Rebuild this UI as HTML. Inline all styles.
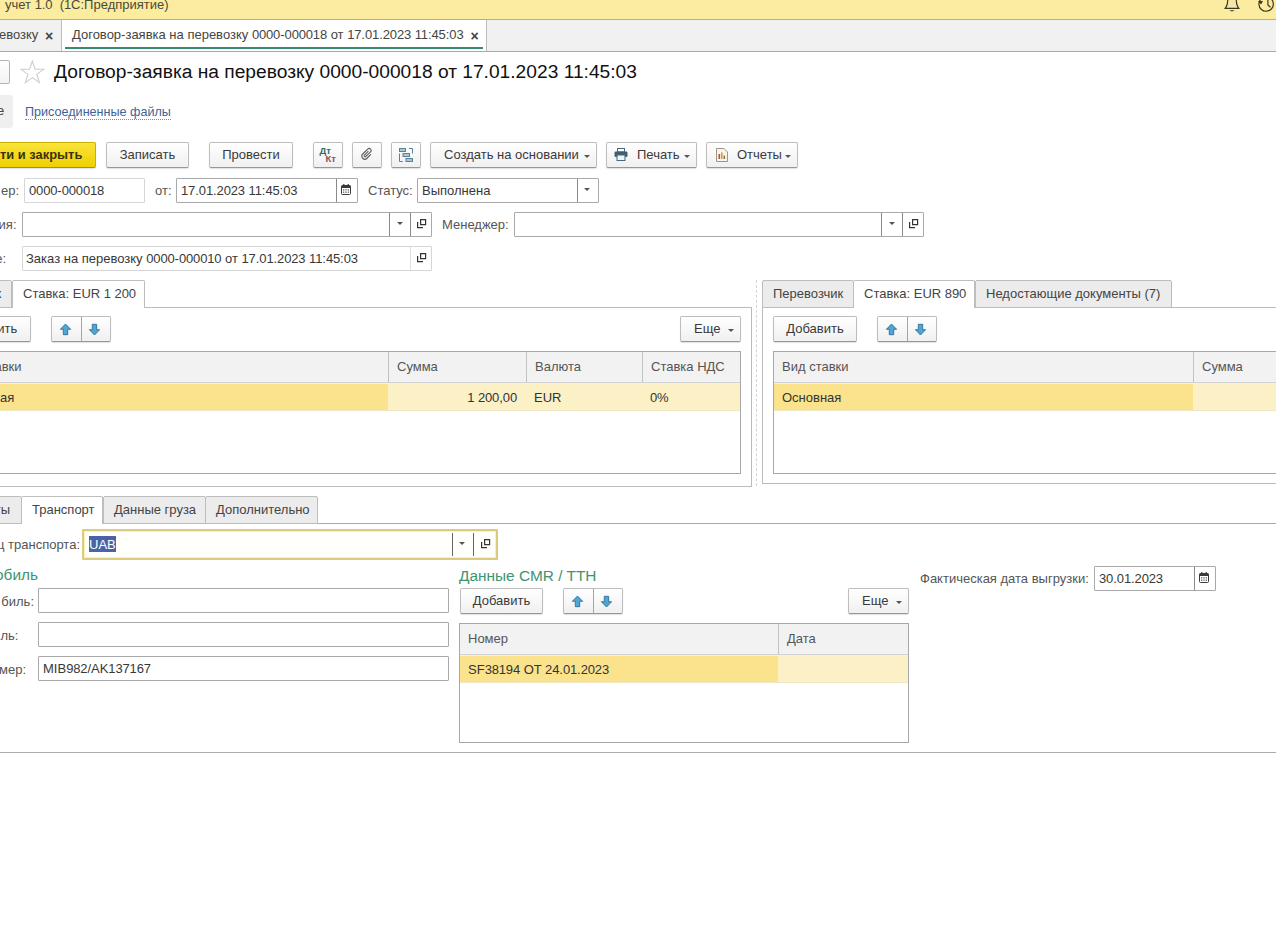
<!DOCTYPE html>
<html><head><meta charset="utf-8">
<style>
*{box-sizing:border-box;margin:0;padding:0}
html,body{width:1276px;height:926px;overflow:hidden;background:#fff;font-family:"Liberation Sans",sans-serif;font-size:13px;color:#333}
.a{position:absolute;white-space:nowrap}
.t{position:absolute;white-space:nowrap;line-height:15px}
.btn{position:absolute;height:26px;border:1px solid #bdbdbd;border-bottom-color:#979797;border-radius:2px;background:linear-gradient(#fff,#f0f0f0);box-shadow:0 1px 1px rgba(0,0,0,.12);text-align:center;line-height:24px;color:#3a3a3a;white-space:nowrap}
.fld{position:absolute;height:25px;border:1px solid #a9a9a9;border-radius:1px;background:#fff;line-height:23px;padding-left:4px;color:#383838;white-space:nowrap}
.lbl{position:absolute;color:#555;white-space:nowrap;line-height:15px}
.tri{position:absolute;width:0;height:0;border-left:3.5px solid transparent;border-right:3.5px solid transparent;border-top:3.5px solid #555}
.sep{position:absolute;top:0;bottom:0;width:1px;background:#cfcfcf}
.tab{position:absolute;height:28px;border:1px solid #bdbdbd;border-radius:2px 2px 0 0;background:#ececec;line-height:26px;color:#444;padding-left:10px;white-space:nowrap}
.tab.on{background:#fff;border-bottom:none;z-index:2}
.tbl{position:absolute;border:1px solid #a8a8a8;background:#fff;overflow:hidden}
.th{position:absolute;top:0;height:31px;background:#f2f2f2;border-bottom:1px solid #d2d2d2;line-height:30px;color:#555;padding-left:8px;white-space:nowrap}
.tr{position:absolute;height:28px;line-height:27px;color:#333;padding-left:8px;white-space:nowrap;border-bottom:1px solid #efe6c6}
.dg{letter-spacing:-0.15px}
.green{position:absolute;color:#3e9470;font-size:15.4px;white-space:nowrap;line-height:18px}
</style></head><body>
<div class="a" style="left:0;top:0;width:1276px;height:20px;background:#fbec9f;border-bottom:1px solid #b8af88"></div>
<div class="a" style="left:5px;top:-3px;color:#4a4a3a">учет <span class="dg">1</span>.<span class="dg">0</span>&nbsp; (<span class="dg">1</span>С:Предприятие)</div>
<svg class="a" style="left:1220px;top:-4px" width="24" height="18" viewBox="0 0 24 18"><path d="M8.2 0 L7.3 8 Q6.5 10.5 5.2 12.3 H18.8 Q17.5 10.5 16.7 8 L15.8 0" fill="#f6e7a6" stroke="#3d3822" stroke-width="1.2"/><path d="M9.3 14.3 H14.7 Q12 16.6 9.3 14.3 Z" fill="#3d3822"/></svg>
<svg class="a" style="left:1250px;top:-5px" width="26" height="20" viewBox="0 0 26 20"><path d="M11 4 A7.2 7.2 0 1 0 20 3" fill="none" stroke="#3d3822" stroke-width="1.2"/><path d="M17.9 2 V10 L20.5 12.3" fill="none" stroke="#3d3822" stroke-width="1.2"/><path d="M8 6 L13 6 L11 9.5 Z" fill="#3d3822"/></svg>
<div class="a" style="left:0;top:20px;width:1276px;height:32px;background:#f1f1f1;border-bottom:1px solid #a9a9a9"></div>
<div class="a" style="left:-1px;top:27px;color:#444">евозку</div>
<div class="a" style="left:45px;top:28px;font-size:14px;color:#444;font-weight:bold">×</div>
<div class="a" style="left:61px;top:20px;width:1px;height:31px;background:#bdbdbd"></div>
<div class="a" style="left:62px;top:20px;width:424px;height:31px;background:#fff"></div>
<div class="a" style="left:486px;top:20px;width:1px;height:31px;background:#bdbdbd"></div>
<div class="a" style="left:72px;top:27px;color:#444">Договор-заявка на перевозку <span class="dg">0000</span>-<span class="dg">000018</span> от <span class="dg">17</span>.<span class="dg">01</span>.<span class="dg">2023</span> <span class="dg">11</span>:<span class="dg">45</span>:<span class="dg">03</span></div>
<div class="a" style="left:470.5px;top:27.5px;font-size:14px;color:#444;font-weight:bold">×</div>
<div class="a" style="left:65px;top:47px;width:418px;height:2px;background:#3b8a6a"></div>
<div class="a" style="left:-4px;top:60px;width:14px;height:24px;border:1px solid #b4b4b4;border-radius:2px;background:linear-gradient(#fff,#f3f3f3)"></div>
<svg class="a" style="left:20px;top:60px" width="25" height="25" viewBox="0 0 25 25"><path d="M12.40 1.10 L15.13 9.25 L23.72 9.32 L16.81 14.43 L19.39 22.63 L12.40 17.64 L5.41 22.63 L7.99 14.43 L1.08 9.32 L9.67 9.25 Z" fill="none" stroke="#cdcdcd" stroke-width="1.1" stroke-linejoin="miter"/></svg>
<div class="a" style="left:54px;top:61px;font-size:19.2px;color:#111">Договор-заявка на перевозку 0000-000018 от 17.01.2023 11:45:03</div>
<div class="a" style="left:-4px;top:95px;width:17px;height:33px;background:#efefef;border-radius:3px"></div>
<div class="t" style="left:-3px;top:103px;color:#444">е</div>
<div class="t" style="left:25px;top:106px;font-size:12.6px;color:#3d6396;border-bottom:1px dotted #6f8db5;line-height:13px">Присоединенные файлы</div>
<div class="btn" style="left:-6px;top:142px;width:102px;background:linear-gradient(#fbe84a,#f1d400);border-color:#d2b800;border-bottom-color:#b09a00;font-weight:bold;color:#3a3206;text-align:left;padding-left:5px;font-size:12.9px;background:linear-gradient(#f9e33a,#efd000);border-color:#c9b100;border-bottom-color:#a89300">ти и закрыть</div>
<div class="btn" style="left:106px;top:142px;width:83px">Записать</div>
<div class="btn" style="left:209px;top:142px;width:84px">Провести</div>
<div class="btn" style="left:313px;top:142px;width:30px"><span class="a" style="left:5.5px;top:3px;font-size:9.5px;line-height:10px;font-weight:bold;color:#2f6f5a">Дт</span><span class="a" style="left:11.5px;top:11px;font-size:9.5px;line-height:10px;font-weight:bold;color:#8f4f52">Кт</span></div>
<div class="btn" style="left:352px;top:142px;width:30px"><svg class="a" style="left:7px;top:4px" width="14" height="14" viewBox="0 0 14 14"><path transform="translate(1,-0.5) rotate(45 6 7.5)" d="M5 4.5 V10 A1 1 0 0 0 7 10 V3.5 A2 2 0 0 0 3 3.5 V10.5 A3 3 0 0 0 9 10.5 V5" fill="none" stroke="#5d5d5d" stroke-width="1.1"/></svg></div>
<div class="btn" style="left:391px;top:142px;width:30px"><svg class="a" style="left:6px;top:4px" width="17" height="17" viewBox="0 0 17 17"><g fill="#afc6d2" stroke="#5b8397" stroke-width="1"><rect x="1.5" y="1.5" width="6" height="3"/><rect x="5" y="6.5" width="6.5" height="3"/><rect x="8" y="11.5" width="6.5" height="3"/></g><path d="M1.5 6.5 V14.5 H4.8 M11 1.5 H14.5 V6.5" fill="none" stroke="#5b8397"/></svg></div>
<div class="btn" style="left:430px;top:142px;width:167px;text-align:left;padding-left:13px">Создать на основании<span class="tri" style="left:153px;top:12px"></span></div>
<div class="btn" style="left:606px;top:142px;width:91px;text-align:left;padding-left:30px">Печать<span class="tri" style="left:77px;top:12px"></span><svg class="a" style="left:7px;top:5px" width="14" height="13" viewBox="0 0 14 13"><rect x="3.5" y="0.5" width="7" height="3.5" fill="#fff" stroke="#4a6878"/><rect x="0.5" y="3.5" width="13" height="5.5" rx="1.2" fill="#3f5f70"/><rect x="3" y="7" width="8" height="5.5" fill="#eef5f9" stroke="#4a6878"/></svg></div>
<div class="btn" style="left:706px;top:142px;width:92px;text-align:left;padding-left:30px">Отчеты<span class="tri" style="left:78px;top:12px"></span><svg class="a" style="left:8.5px;top:5px" width="12" height="14" viewBox="0 0 12 14"><path d="M0.5 0.5 H8 L11.5 4 V13.5 H0.5 Z" fill="#f8f4ea" stroke="#9d9686"/><rect x="2.5" y="6" width="1.6" height="5" fill="#b5503d"/><rect x="5" y="4.5" width="1.6" height="6.5" fill="#d49a3a"/><rect x="7.5" y="7.5" width="1.6" height="3.5" fill="#8a7a4a"/></svg></div>
<div class="lbl" style="left:-281px;width:300px;text-align:right;top:183px;">ер:</div>
<div class="fld" style="left:24px;top:178px;width:121px;border-color:#d6d6d6"><span class="dg">0000</span>-<span class="dg">000018</span></div>
<div class="lbl" style="left:155px;top:183px">от:</div>
<div class="fld" style="left:176px;top:178px;width:182px"><span class="dg">17</span>.<span class="dg">01</span>.<span class="dg">2023</span> <span class="dg">11</span>:<span class="dg">45</span>:<span class="dg">03</span><div class="sep" style="left:159px;background:#8a8a8a"></div><svg class="a" style="left:164px;top:5px" width="10" height="11" viewBox="0 0 10 11"><rect x="0.5" y="1.5" width="9" height="9" rx="1" fill="#fff" stroke="#3a3a3a" stroke-width="1"/><rect x="0.5" y="1.5" width="9" height="2.5" fill="#3a3a3a"/><g fill="#555"><rect x="2" y="5.3" width="1.3" height="1.2"/><rect x="4.35" y="5.3" width="1.3" height="1.2"/><rect x="6.7" y="5.3" width="1.3" height="1.2"/><rect x="2" y="7.6" width="1.3" height="1.2"/><rect x="4.35" y="7.6" width="1.3" height="1.2"/><rect x="6.7" y="7.6" width="1.3" height="1.2"/></g><g fill="#3a3a3a"><rect x="2.2" y="0" width="1.2" height="2"/><rect x="6.6" y="0" width="1.2" height="2"/></g></svg></div>
<div class="lbl" style="left:368px;top:183px">Статус:</div>
<div class="fld" style="left:417px;top:178px;width:182px">Выполнена<div class="sep" style="left:159px;background:#8a8a8a"></div><span class="tri" style="left:166px;top:9px"></span></div>
<div class="lbl" style="left:-283.5px;width:300px;text-align:right;top:217px;">Организация:</div>
<div class="fld" style="left:22px;top:212px;width:410px"><div class="sep" style="left:366px;background:#8a8a8a"></div><span class="tri" style="left:374px;top:9px"></span><div class="sep" style="left:387px;background:#8a8a8a"></div><svg class="a" style="left:394px;top:6px" width="10" height="10" viewBox="0 0 10 10"><path d="M3.6 0.6 H8.6 V5.6 H3.6 Z M0.6 3 V8.6 H6" fill="none" stroke="#333" stroke-width="1.2"/></svg></div>
<div class="lbl" style="left:442px;top:217px">Менеджер:</div>
<div class="fld" style="left:514px;top:212px;width:410px"><div class="sep" style="left:366px;background:#8a8a8a"></div><span class="tri" style="left:374px;top:9px"></span><div class="sep" style="left:387px;background:#8a8a8a"></div><svg class="a" style="left:394px;top:6px" width="10" height="10" viewBox="0 0 10 10"><path d="M3.6 0.6 H8.6 V5.6 H3.6 Z M0.6 3 V8.6 H6" fill="none" stroke="#333" stroke-width="1.2"/></svg></div>
<div class="lbl" style="left:-294px;width:300px;text-align:right;top:251px;">Основание:</div>
<div class="fld" style="left:22px;top:246px;width:410px;border-color:#d6d6d6;padding-left:3px">Заказ на перевозку <span class="dg">0000</span>-<span class="dg">000010</span> от <span class="dg">17</span>.<span class="dg">01</span>.<span class="dg">2023</span> <span class="dg">11</span>:<span class="dg">45</span>:<span class="dg">03</span><div class="sep" style="left:387px;background:#e0e0e0"></div><svg class="a" style="left:394px;top:6px" width="10" height="10" viewBox="0 0 10 10"><path d="M3.6 0.6 H8.6 V5.6 H3.6 Z M0.6 3 V8.6 H6" fill="none" stroke="#333" stroke-width="1.2"/></svg></div>
<div class="a" style="left:-10px;top:307px;width:762px;height:180px;border:1px solid #bcbcbc"></div>
<div class="tab" style="left:-80px;top:280px;width:92px">Перевозчик</div>
<div class="tab on" style="left:12px;top:280px;width:133px">Ставка: EUR <span class="dg">1</span> <span class="dg">200</span></div>
<div class="btn" style="left:-54px;top:316px;width:85px">Добавить</div>
<div class="btn" style="left:51px;top:316px;width:60px"><div class="sep" style="left:29px;background:#a5a5a5"></div><svg class="a" style="left:7px;top:6px" width="13" height="13" viewBox="0 0 13 13"><path d="M6.5 1 L11.6 6.3 H8.7 V11.7 H4.3 V6.3 H1.4 Z" fill="#4ea5d6" stroke="#2e6f92" stroke-width="0.9"/></svg><svg class="a" style="left:36px;top:6px" width="13" height="13" viewBox="0 0 13 13"><path d="M6.5 12 L11.6 6.7 H8.7 V1.3 H4.3 V6.7 H1.4 Z" fill="#4ea5d6" stroke="#2e6f92" stroke-width="0.9"/></svg></div>
<div class="btn" style="left:680px;top:316px;width:61px;text-align:left;padding-left:13px">Еще<span class="tri" style="left:47px;top:12px"></span></div>
<div class="tbl" style="left:-54px;top:351px;width:795px;height:123px"><div class="th" style="left:0;width:441px">Вид ставки</div><div class="th" style="left:441px;width:138px;border-left:1px solid #c2c2c2">Сумма</div><div class="th" style="left:579px;width:116px;border-left:1px solid #c2c2c2">Валюта</div><div class="th" style="left:695px;width:99px;border-left:1px solid #c2c2c2">Ставка НДС</div><div class="tr" style="left:0;top:31px;width:441px;background:#fbe38d;border-top:1px solid #fbf1cf">Основная</div><div class="tr" style="left:441px;top:31px;width:138px;background:#fcf1c6;border-top:1px solid #fbf1cf;text-align:right;padding-right:9px"><span class="dg">1</span> <span class="dg">200</span>,<span class="dg">00</span></div><div class="tr" style="left:579px;top:31px;width:116px;background:#fcf1c6;border-top:1px solid #fbf1cf">EUR</div><div class="tr" style="left:695px;top:31px;width:99px;background:#fcf1c6;border-top:1px solid #fbf1cf"><span class="dg">0</span>%</div></div>
<div class="a" style="left:756px;top:280px;width:0;height:206px;border-left:1px dashed #d4d4d4"></div>
<div class="a" style="left:762px;top:307px;width:520px;height:177px;border:1px solid #bcbcbc;border-right:none"></div>
<div class="tab" style="left:762px;top:280px;width:92px">Перевозчик</div>
<div class="tab on" style="left:853px;top:280px;width:122px">Ставка: EUR <span class="dg">890</span></div>
<div class="tab" style="left:975px;top:280px;width:197px">Недостающие документы (<span class="dg">7</span>)</div>
<div class="btn" style="left:773px;top:316px;width:84px">Добавить</div>
<div class="btn" style="left:877px;top:316px;width:60px"><div class="sep" style="left:29px;background:#a5a5a5"></div><svg class="a" style="left:7px;top:6px" width="13" height="13" viewBox="0 0 13 13"><path d="M6.5 1 L11.6 6.3 H8.7 V11.7 H4.3 V6.3 H1.4 Z" fill="#4ea5d6" stroke="#2e6f92" stroke-width="0.9"/></svg><svg class="a" style="left:36px;top:6px" width="13" height="13" viewBox="0 0 13 13"><path d="M6.5 12 L11.6 6.7 H8.7 V1.3 H4.3 V6.7 H1.4 Z" fill="#4ea5d6" stroke="#2e6f92" stroke-width="0.9"/></svg></div>
<div class="tbl" style="left:773px;top:351px;width:520px;height:123px"><div class="th" style="left:0;width:419px">Вид ставки</div><div class="th" style="left:419px;width:101px;border-left:1px solid #c2c2c2">Сумма</div><div class="tr" style="left:0;top:31px;width:419px;background:#fbe38d;border-top:1px solid #fbf1cf">Основная</div><div class="tr" style="left:419px;top:31px;width:101px;background:#fcf1c6;border-top:1px solid #fbf1cf"></div></div>
<div class="a" style="left:0;top:523px;width:1276px;height:1px;background:#a9a9a9"></div>
<div class="tab" style="left:-50px;top:496px;width:72px;padding-left:0;text-align:right;padding-right:11px">ты</div>
<div class="tab on" style="left:21px;top:496px;width:82px">Транспорт</div>
<div class="tab" style="left:103px;top:496px;width:103px">Данные груза</div>
<div class="tab" style="left:205px;top:496px;width:113px">Дополнительно</div>
<div class="lbl" style="left:-220px;width:300px;text-align:right;top:537px;">Владелец транспорта:</div>
<div class="a" style="left:82px;top:529px;width:416px;height:31px;border:2px solid #dccb7e;background:#fffffb;border-radius:1px"></div>
<div class="a" style="left:84px;top:531px;width:412px;height:27px;border:1px solid #fbf1b8"></div>
<div class="a" style="left:89px;top:536px;width:27px;height:16px;background:#4c62a6"></div>
<div class="t" style="left:89px;top:537px;color:#fff">UAB</div>
<div class="a" style="left:452px;top:533px;width:1px;height:23px;background:#666"></div>
<div class="a" style="left:473px;top:533px;width:1px;height:23px;background:#666"></div>
<span class="tri" style="left:459px;top:542px"></span>
<svg class="a" style="left:481px;top:539px" width="10" height="10" viewBox="0 0 10 10"><path d="M3.6 0.6 H8.6 V5.6 H3.6 Z M0.6 3 V8.6 H6" fill="none" stroke="#333" stroke-width="1.2"/></svg>
<div class="green" style="left:-262px;width:300px;text-align:right;top:566px">Автомобиль</div>
<div class="lbl" style="left:-266px;width:300px;text-align:right;top:594px;">биль:</div>
<div class="fld" style="left:38px;top:588px;width:411px"></div>
<div class="lbl" style="left:-281.5px;width:300px;text-align:right;top:628px;">ль:</div>
<div class="fld" style="left:38px;top:622px;width:411px"></div>
<div class="lbl" style="left:-274px;width:300px;text-align:right;top:662px;">мер:</div>
<div class="fld" style="left:38px;top:656px;width:411px">MIB<span class="dg">982</span>/AK<span class="dg">137167</span></div>
<div class="green" style="left:459px;top:567px">Данные CMR / TTH</div>
<div class="btn" style="left:460px;top:588px;width:83px">Добавить</div>
<div class="btn" style="left:563px;top:588px;width:60px"><div class="sep" style="left:29px;background:#a5a5a5"></div><svg class="a" style="left:7px;top:6px" width="13" height="13" viewBox="0 0 13 13"><path d="M6.5 1 L11.6 6.3 H8.7 V11.7 H4.3 V6.3 H1.4 Z" fill="#4ea5d6" stroke="#2e6f92" stroke-width="0.9"/></svg><svg class="a" style="left:36px;top:6px" width="13" height="13" viewBox="0 0 13 13"><path d="M6.5 12 L11.6 6.7 H8.7 V1.3 H4.3 V6.7 H1.4 Z" fill="#4ea5d6" stroke="#2e6f92" stroke-width="0.9"/></svg></div>
<div class="btn" style="left:848px;top:588px;width:61px;text-align:left;padding-left:13px">Еще<span class="tri" style="left:47px;top:12px"></span></div>
<div class="tbl" style="left:459px;top:623px;width:450px;height:120px"><div class="th" style="left:0;width:318px">Номер</div><div class="th" style="left:318px;width:130px;border-left:1px solid #c2c2c2">Дата</div><div class="tr" style="left:0;top:31px;width:318px;background:#fbe38d;border-top:1px solid #fbf1cf">SF<span class="dg">38194</span> OT <span class="dg">24</span>.<span class="dg">01</span>.<span class="dg">2023</span></div><div class="tr" style="left:318px;top:31px;width:130px;background:#fcf1c6;border-top:1px solid #fbf1cf"></div></div>
<div class="lbl" style="left:920px;top:571px">Фактическая дата выгрузки:</div>
<div class="fld" style="left:1094px;top:566px;width:122px"><span class="dg">30</span>.<span class="dg">01</span>.<span class="dg">2023</span><div class="sep" style="left:99px;background:#8a8a8a"></div><svg class="a" style="left:104px;top:5px" width="10" height="11" viewBox="0 0 10 11"><rect x="0.5" y="1.5" width="9" height="9" rx="1" fill="#fff" stroke="#3a3a3a" stroke-width="1"/><rect x="0.5" y="1.5" width="9" height="2.5" fill="#3a3a3a"/><g fill="#555"><rect x="2" y="5.3" width="1.3" height="1.2"/><rect x="4.35" y="5.3" width="1.3" height="1.2"/><rect x="6.7" y="5.3" width="1.3" height="1.2"/><rect x="2" y="7.6" width="1.3" height="1.2"/><rect x="4.35" y="7.6" width="1.3" height="1.2"/><rect x="6.7" y="7.6" width="1.3" height="1.2"/></g><g fill="#3a3a3a"><rect x="2.2" y="0" width="1.2" height="2"/><rect x="6.6" y="0" width="1.2" height="2"/></g></svg></div>
<div class="a" style="left:0;top:752px;width:1276px;height:1px;background:#acacac"></div>
</body></html>
